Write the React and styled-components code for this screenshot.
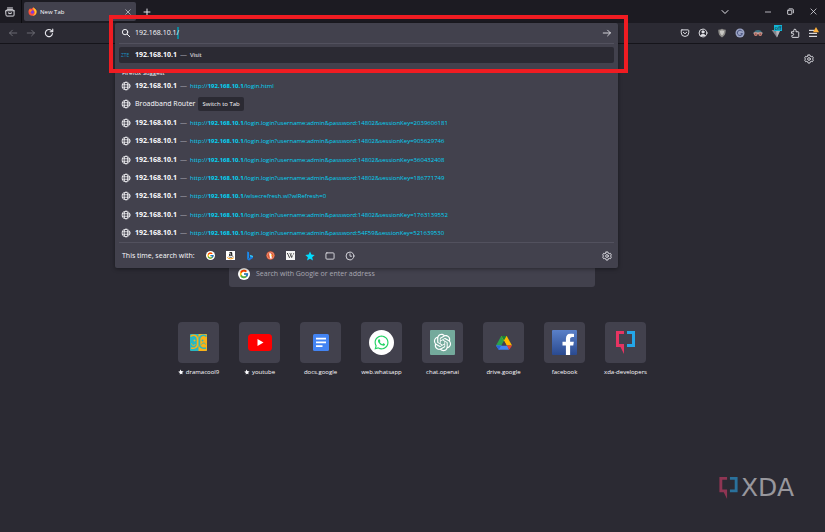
import React, { useEffect, useRef } from "react";
import styled, { createGlobalStyle } from "styled-components";
import { FcGoogle } from "react-icons/fc";
import { FaWikipediaW, FaAmazon, FaWhatsapp, FaFacebookF } from "react-icons/fa";
import { RiOpenaiFill } from "react-icons/ri";

const suggestions = [
  { path: "/login.html" },
  { title: "Broadband Router", switchTab: true },
  { path: "/login.login?username:admin&password:14802&sessionKey=2039606181" },
  { path: "/login.login?username:admin&password:14802&sessionKey=905629746" },
  { path: "/login.login?username:admin&password:14802&sessionKey=360432408" },
  { path: "/login.login?username:admin&password:14802&sessionKey=186771749" },
  { path: "/wlsecrefresh.wl?wlRefresh=0" },
  { path: "/login.login?username:admin&password:14802&sessionKey=1763139552" },
  { path: "/login.login?username:admin&password:54F59&sessionKey=521639530" },
];

/* ---------- line icons ---------- */

const Line = ({ size = 10, width = 1.4, children }) => (
  <svg
    width={size}
    height={size}
    viewBox="0 0 16 16"
    fill="none"
    stroke="currentColor"
    strokeWidth={width}
    strokeLinecap="round"
    strokeLinejoin="round"
    aria-hidden="true"
  >
    {children}
  </svg>
);

const ViewIcon = () => (
  <Line size={10} width={1.5}>
    <path d="M4 1.500h8" />
    <path d="M1.500 6 3.500 3.800h9L14.500 6v7a1.500 1.500 0 0 1-1.500 1.500H3A1.500 1.500 0 0 1 1.500 13zM1.500 6h13M6 9v1.500h4V9" />
  </Line>
);
const CloseIcon = ({ size = 6 }) => (
  <Line size={size} width={1.7}>
    <path d="M2 2l12 12M14 2 2 14" />
  </Line>
);
const PlusIcon = () => (
  <Line size={8} width={2}>
    <path d="M8 2v12M2 8h12" />
  </Line>
);
const ChevronIcon = () => (
  <Line size={8} width={2}>
    <path d="M2 5l6 6 6-6" />
  </Line>
);
const MinimizeIcon = () => (
  <Line size={6} width={2}>
    <path d="M1 8h14" />
  </Line>
);
const RestoreIcon = () => (
  <Line size={7} width={2}>
    <rect x="1.5" y="5" width="9.5" height="9.5" rx="1" />
    <path d="M5 2h7a2.5 2.5 0 0 1 2.5 2.5V11" />
  </Line>
);
const BackIcon = () => (
  <Line>
    <path d="M14 8H2.500M7 3.500 2.500 8 7 12.500" />
  </Line>
);
const ForwardIcon = () => (
  <Line>
    <path d="M2 8h11.500M9 3.500 13.500 8 9 12.500" />
  </Line>
);
const ReloadIcon = () => (
  <Line width={1.8}>
    <path d="M13.500 9A5.700 5.700 0 1 1 12 4.200l1.500 1.300M14 1.800V6H9.800" />
  </Line>
);
const SearchIcon = () => (
  <Line width={1.5}>
    <circle cx="6.500" cy="6.500" r="4.300" />
    <path d="M10 10l4 4" />
  </Line>
);
const GlobeIcon = () => (
  <Line width={1.2}>
    <circle cx="8" cy="8" r="6.300" />
    <ellipse cx="8" cy="8" rx="3" ry="6.300" />
    <path d="M2 6h12M2 10h12" />
  </Line>
);
const GearIcon = () => (
  <Line width={1.4}>
    <path d="M6.500 1.500h3l.5 2 1.500.8 2-.6 1.500 2.600L13.500 8l1.500 1.700-1.500 2.600-2-.6-1.500.8-.5 2h-3l-.5-2-1.500-.8-2 .6L1 9.700 2.500 8 1 6.300l1.500-2.600 2 .6L6 3.500z" />
    <circle cx="8" cy="8" r="2.200" />
  </Line>
);
const PocketIcon = () => (
  <Line width={1.5}>
    <path d="M3 3h10a1 1 0 0 1 1 1v3.500a6 6 0 0 1-12 0V4a1 1 0 0 1 1-1z" />
    <path d="M5.300 6.800 8 9.300l2.700-2.500" />
  </Line>
);
const AccountIcon = () => (
  <Line width={1.5}>
    <circle cx="8" cy="8" r="6.300" />
    <circle cx="8" cy="6.300" r="1.800" fill="currentColor" />
    <path d="M4.500 11.500c.8-1.500 6.200-1.500 7 0z" fill="currentColor" />
  </Line>
);
const ExtensionIcon = () => (
  <Line width={1.5}>
    <path d="M3 6h3V3.700a1.800 1.800 0 0 1 3.600 0V6H13a1 1 0 0 1 1 1v7a1 1 0 0 1-1 1H4a1 1 0 0 1-1-1v-2.200h1.200a1.600 1.600 0 0 0 0-3.300H3z" />
  </Line>
);
const TabIcon = () => (
  <Line width={1.4}>
    <rect x="1.500" y="3" width="13" height="10" rx="1.500" />
  </Line>
);
const ClockIcon = () => (
  <Line width={1.4}>
    <circle cx="8" cy="8" r="6.300" />
    <path d="M8 4.500v3.800h2.500" />
  </Line>
);

/* ---------- colour icons ---------- */

const FirefoxIcon = () => (
  <svg width="9" height="9" viewBox="0 0 16 16" aria-hidden="true">
    <path d="M2.500 3.500 4 2l1 1.700C7 2.500 8 2 9.500.3c1 2 5.700 3.200 5.700 8A7.200 7.200 0 0 1 .8 8.500c0-2 .7-3.700 1.700-5z" fill="#ff4f3c" />
    <path d="M9.500.3c1 2 5.700 3.200 5.700 8A7.200 7.200 0 0 1 8 15.700c5-2.700 5-7 2.500-10-.8-1.300-1.500-3-1-5.400z" fill="#ffc52e" />
    <circle cx="7.800" cy="8.800" r="3.200" fill="#7b3ddb" />
    <path d="M2.500 5c2-.8 3.500 0 5 1.200C6.500 8 5 7.500 4.500 9 3 8.500 2.300 6.500 2.500 5z" fill="#ff8a1d" />
  </svg>
);
const ShieldIcon = () => (
  <svg width="10" height="10" viewBox="0 0 16 16" aria-hidden="true">
    <path d="M8 1c2 1.300 4 1.700 6 1.700 0 6-1.200 9.700-6 12.300C3.200 12.400 2 8.700 2 2.700 4 2.700 6 2.300 8 1z" fill="#8c8b88" />
    <path d="M8 3.500c1 .7 2.300 1 3.500 1-.2 3.500-1 6-3.500 7.500C5.500 10.500 4.700 8 4.500 4.500c1.200 0 2.500-.3 3.500-1z" fill="#c9c8c4" />
  </svg>
);
const GrammarlyIcon = () => (
  <svg width="10" height="10" viewBox="0 0 16 16" aria-hidden="true">
    <circle cx="8" cy="8" r="7.200" fill="#9aa3c4" />
    <path d="M11.500 5.500A4.200 4.200 0 1 0 12 9H9" fill="none" stroke="#414b78" strokeWidth="1.500" />
  </svg>
);
const GogglesIcon = () => (
  <svg width="10" height="10" viewBox="0 0 16 16" aria-hidden="true">
    <path d="M2 7c1-5 11-5 12 0z" fill="#3f7484" />
    <rect x="1" y="7" width="14" height="2.500" fill="#b9c3c8" />
    <circle cx="4.500" cy="9.700" r="3" fill="#d38577" />
    <circle cx="11.500" cy="9.700" r="3" fill="#d38577" />
    <circle cx="4.500" cy="9.700" r="1" fill="#3c3542" />
    <circle cx="11.500" cy="9.700" r="1" fill="#3c3542" />
  </svg>
);
const FunnelIcon = () => (
  <svg width="10" height="10" viewBox="0 0 16 16" aria-hidden="true">
    <path d="M1 3h14L9.500 15z" fill="#85848c" />
    <path d="M8 3h7L9.500 15z" fill="#b5b4ba" />
  </svg>
);
const MenuIcon = () => (
  <svg width="12" height="12" viewBox="0 0 18 18" aria-hidden="true">
    <path d="M3 5h8M3 9.500h12M3 14h12" stroke="#fbfbfe" strokeWidth="1.500" />
    <path d="M13.500 0 18 8H9z" fill="#ffb13b" />
  </svg>
);
const AmazonIcon = () => (
  <svg width="9" height="9" viewBox="0 0 18 18" aria-hidden="true">
    <rect width="18" height="18" fill="#fff" />
    <FaAmazon x="3" y="1" size={13} color="#111" />
    <path d="M2.500 13c4 3.500 9 3.500 13 .5" fill="none" stroke="#f90" strokeWidth="2" />
  </svg>
);
const BingIcon = () => (
  <svg width="10" height="10" viewBox="0 0 16 16" aria-hidden="true">
    <path d="M3.500.8 6.500 2v9l-3 2.500z" fill="#1b8bf0" />
    <path d="M7.500 6 12.800 8v3.300L6.500 15l-3-1.500L8.500 10z" fill="#1a7ee0" />
    <path d="m7.500 6 5.300 2v1.500L8.800 9z" fill="#39c5ea" />
  </svg>
);
const DuckIcon = () => (
  <svg width="9" height="9" viewBox="0 0 16 16" aria-hidden="true">
    <circle cx="8" cy="8" r="7.500" fill="#de5833" />
    <circle cx="8" cy="8" r="6" fill="none" stroke="#f3c0b0" strokeWidth=".8" />
    <path d="M5.500 4.500C7 3 10 4 10 7l.3 6.300-3 .2z" fill="#fff" />
    <path d="M8.500 7.500h4l-3 2z" fill="#fdd20a" />
  </svg>
);
const WikiIcon = () => (
  <svg width="9" height="9" viewBox="0 0 18 18" aria-hidden="true">
    <rect width="18" height="18" fill="#f4f4f4" />
    <FaWikipediaW x="1" y="1" size={16} color="#111" />
  </svg>
);
const StarIcon = () => (
  <svg width="10" height="10" viewBox="0 0 16 16" aria-hidden="true">
    <path d="m8 .8 2.200 4.900 5.300.5-4 3.600 1.200 5.200L8 12.300 3.300 15l1.200-5.200-4-3.600 5.300-.5z" fill="#00ddff" />
  </svg>
);
const GoogleIcon = ({ size = 9 }) => (
  <svg width={size} height={size} viewBox="0 0 24 24" aria-hidden="true">
    <circle cx="12" cy="12" r="12" fill="#fff" />
    <FcGoogle x="2" y="2" size={20} />
  </svg>
);
const PinIcon = () => (
  <svg width="6" height="6" viewBox="0 0 16 16" aria-hidden="true">
    <path d="M6 1l3 4 6 1.500L11 10l1.500 4-4.500-1.500-3.500 2L5 10.500.5 7.500 5 6z" fill="#fbfbfe" />
  </svg>
);

/* ---------- shortcut logos ---------- */

const DramaLogo = () => (
  <svg width="17" height="17" viewBox="0 0 34 34" aria-hidden="true">
    <rect width="34" height="34" rx="2" fill="#27b8c4" />
    <path d="M17 0h15a2 2 0 0 1 2 2v30a2 2 0 0 1-2 2H17z" fill="#fbb116" />
    <path d="M1 5c6-5 14-2 14 6v9c0 7-6 10-13 8" fill="none" stroke="#fbb116" strokeWidth="3" />
    <path d="M33 5c-6-5-14-2-14 6v9c0 7 6 10 13 8" fill="none" stroke="#27b8c4" strokeWidth="3" />
    <path d="M3 19c1 5 6 5 8 1" fill="none" stroke="#fbb116" strokeWidth="2" />
    <path d="M23 21c2-4 7-4 8 0" fill="none" stroke="#27b8c4" strokeWidth="2" />
    <circle cx="9" cy="13" r="2" fill="#fbb116" />
    <circle cx="25" cy="13" r="2" fill="#27b8c4" />
  </svg>
);
const YoutubeLogo = () => (
  <svg width="24" height="17" viewBox="0 0 48 34" aria-hidden="true">
    <rect width="48" height="34" rx="7" fill="#f00" />
    <path d="M19 10v14l12-7z" fill="#fff" />
  </svg>
);
const DocsLogo = () => (
  <svg width="16" height="17" viewBox="0 0 32 34" aria-hidden="true">
    <rect width="32" height="34" rx="3" fill="#4384f3" />
    <path d="M6 9h20M6 16.500h20M6 24h13" stroke="#fff" strokeWidth="3.500" />
  </svg>
);
const WhatsappLogo = () => (
  <svg width="25" height="25" viewBox="0 0 50 50" aria-hidden="true">
    <circle cx="25" cy="25" r="25" fill="#fff" />
    <FaWhatsapp x="9" y="9" size={32} color="#25d366" />
  </svg>
);
const OpenaiLogo = () => (
  <svg width="25" height="25" viewBox="0 0 50 50" aria-hidden="true">
    <rect width="50" height="50" rx="2" fill="#74aa9c" />
    <RiOpenaiFill x="4" y="4" size={42} color="#fff" />
  </svg>
);
const DriveLogo = () => (
  <svg width="16" height="14" viewBox="0 0 32 28" aria-hidden="true">
    <path d="M10.500 0H16l3.500 6L7 27 0 19z" fill="#2ba24c" />
    <path d="M10.500 0h11L32 19H21z" fill="#ffba00" />
    <path d="M10.500 0H21l-5 9z" fill="#188038" />
    <path d="M10 19h13l3 8.500H5.500L0 19z" fill="#4285f4" />
    <path d="M0 19h10.500L5.500 27.500z" fill="#2b66d9" />
    <path d="M21.500 19H32l-5.500 8.500z" fill="#ea4335" />
    <path d="M16 9.500 21.500 19h-11z" fill="#42414d" />
  </svg>
);
const FacebookLogo = () => (
  <svg width="25" height="25" viewBox="0 0 50 50" aria-hidden="true">
    <defs>
      <linearGradient id="fb" x2="0" y2="1">
        <stop stopColor="#5a80c8" />
        <stop offset="1" stopColor="#2a4a90" />
      </linearGradient>
    </defs>
    <rect width="50" height="50" rx="2" fill="url(#fb)" />
    <FaFacebookF x="11" y="7" size={43} color="#fff" />
  </svg>
);
const XdaMark = ({ width, height, left, right }) => (
  <svg width={width} height={height} viewBox="0 0 38 46" aria-hidden="true">
    <path d="M16 0v6H6v20h10v20L9 32H0V0z" fill={left} />
    <path d="M22 0h16v32H22v-6h10V6H22z" fill={right} />
  </svg>
);

const engines = [
  ["Google", <GoogleIcon />],
  ["Amazon", <AmazonIcon />],
  ["Bing", <BingIcon />],
  ["DuckDuckGo", <DuckIcon />],
  ["Wikipedia", <WikiIcon />],
  ["Bookmarks", <StarIcon />],
  ["Tabs", <TabIcon />],
  ["History", <ClockIcon />],
];

const shortcuts = [
  { name: "dramacool9", icon: <DramaLogo />, pinned: true },
  { name: "youtube", icon: <YoutubeLogo />, pinned: true },
  { name: "docs.google", icon: <DocsLogo /> },
  { name: "web.whatsapp", icon: <WhatsappLogo /> },
  { name: "chat.openai", icon: <OpenaiLogo /> },
  { name: "drive.google", icon: <DriveLogo /> },
  { name: "facebook", icon: <FacebookLogo /> },
  {
    name: "xda-developers",
    icon: <XdaMark width={19} height={23} left="#e63462" right="#24a6e8" />,
  },
];

const App = () => {
  const inputRef = useRef(null);

  // the autofilled slash stays selected after the typed address
  useEffect(() => {
    const input = inputRef.current;
    input.focus();
    input.setSelectionRange(input.value.length - 1, input.value.length);
  }, []);

  return (
    <>
      <GlobalStyle />
      <TabStrip>
        <ViewCell>
          <IconButton aria-label="Firefox View"><ViewIcon /></IconButton>
        </ViewCell>
        <Tab>
          <FirefoxIcon />
          <TabTitle>New Tab</TabTitle>
          <IconButton $size={12} aria-label="Close tab"><CloseIcon /></IconButton>
        </Tab>
        <IconButton $size={22} aria-label="New tab"><PlusIcon /></IconButton>
        <WindowControls>
          <TabListCell>
            <IconButton aria-label="List all tabs"><ChevronIcon /></IconButton>
          </TabListCell>
          <IconButton $size={23} aria-label="Minimize"><MinimizeIcon /></IconButton>
          <IconButton $size={23} aria-label="Restore"><RestoreIcon /></IconButton>
          <IconButton $size={23} aria-label="Close"><CloseIcon size={7} /></IconButton>
        </WindowControls>
      </TabStrip>

      <Toolbar>
        <Nav>
          <IconButton $dim aria-label="Back"><BackIcon /></IconButton>
          <IconButton $dim aria-label="Forward"><ForwardIcon /></IconButton>
          <IconButton aria-label="Reload"><ReloadIcon /></IconButton>
        </Nav>
        <UrlSlot>
          <UrlPanel>
            <UrlRow>
              <SearchIcon />
              <UrlInput
                ref={inputRef}
                aria-label="Search or enter address"
                defaultValue="192.168.10.1/"
              />
              <IconButton $size={14} aria-label="Go"><ForwardIcon /></IconButton>
            </UrlRow>
            <TopResult href="#visit">
              <ZteMark>ZTE</ZteMark>
              <Host>192.168.10.1</Host>
              <Dash>—</Dash>
              <Action>Visit</Action>
            </TopResult>
            <GroupLabel>Firefox Suggest</GroupLabel>
            <Results>
              {suggestions.map((item, index) => (
                <Result href="#result" key={index}>
                  <GlobeIcon />
                  {item.switchTab ? (
                    <>
                      <span>{item.title}</span>
                      <SwitchChip>Switch to Tab</SwitchChip>
                    </>
                  ) : (
                    <>
                      <Host>192.168.10.1</Host>
                      <Dash>—</Dash>
                      <Url>
                        http://<b>192.168.10.1</b>
                        {item.path}
                      </Url>
                    </>
                  )}
                </Result>
              ))}
            </Results>
            <EngineBar>
              <EngineLabel>This time, search with:</EngineLabel>
              <Engines>
                {engines.map(([name, icon]) => (
                  <IconButton key={name} aria-label={name}>{icon}</IconButton>
                ))}
              </Engines>
              <IconButton $size={14} aria-label="Search settings"><GearIcon /></IconButton>
            </EngineBar>
            <Highlight />
          </UrlPanel>
        </UrlSlot>
        <Extensions>
          <IconButton aria-label="Pocket"><PocketIcon /></IconButton>
          <IconButton aria-label="Account"><AccountIcon /></IconButton>
          <IconButton aria-label="Ad blocker"><ShieldIcon /></IconButton>
          <IconButton aria-label="Grammar"><GrammarlyIcon /></IconButton>
          <IconButton aria-label="Privacy"><GogglesIcon /></IconButton>
          <IconButton aria-label="Filter">
            <FunnelIcon />
            <Badge>off</Badge>
          </IconButton>
          <IconButton aria-label="Extensions"><ExtensionIcon /></IconButton>
          <IconButton aria-label="Menu"><MenuIcon /></IconButton>
        </Extensions>
      </Toolbar>

      <Main>
        <Customize>
          <IconButton aria-label="Personalize new tab"><GearIcon /></IconButton>
        </Customize>
        <HomeSearch>
          <GoogleIcon size={12} />
          Search with Google or enter address
        </HomeSearch>
        <Shortcuts>
          {shortcuts.map((site) => (
            <Shortcut href={"#" + site.name} key={site.name}>
              <Tile>{site.icon}</Tile>
              <SiteName>
                {site.pinned && <PinIcon />}
                {site.name}
              </SiteName>
            </Shortcut>
          ))}
        </Shortcuts>
        <Watermark>
          <XdaMark width={19} height={22} left="#8f3553" right="#2a719c" />
          XDA
        </Watermark>
      </Main>
    </>
  );
};

const GlobalStyle = createGlobalStyle`
  * {
    box-sizing: border-box;
  }
  body {
    margin: 0;
    background: #2b2a33;
    color: #fbfbfe;
    font: 7px/12px "Open Sans", "Noto Sans", sans-serif;
  }
  a {
    color: inherit;
    text-decoration: none;
  }
  svg {
    flex: none;
    display: block;
  }
`;
const IconButton = styled.button`
  position: relative;
  display: flex;
  flex: none;
  align-items: center;
  justify-content: center;
  width: ${(p) => p.$size || 18}px;
  height: 16px;
  padding: 0;
  border: 0;
  background: none;
  color: ${(p) => (p.$dim ? "#74737c" : "#e6e6ec")};
`;
const TabStrip = styled.header`
  display: flex;
  align-items: center;
  height: 23px;
  background: #1c1b22;
`;
const ViewCell = styled.div`
  display: flex;
  align-items: center;
  width: 22px;
  height: 23px;
  margin-right: 2px;
  padding-left: 1px;
  border-right: 1px solid #0c0c0f;
`;
const Tab = styled.div`
  display: flex;
  align-items: center;
  gap: 3px;
  width: 112px;
  height: 19px;
  padding: 0 2px 0 4px;
  border-radius: 2px;
  background: #42414d;
`;
const TabTitle = styled.span`
  flex: 1;
  font-size: 6px;
`;
const WindowControls = styled.div`
  display: flex;
  margin-left: auto;
`;
const TabListCell = styled.div`
  margin-right: 22px;
`;
const Toolbar = styled.nav`
  display: flex;
  height: 21px;
  border-bottom: 1px solid #15141a;
`;
const Nav = styled.div`
  display: flex;
  align-items: center;
  width: 115px;
  padding-left: 4px;
`;
const UrlSlot = styled.div`
  position: relative;
  flex: 1;
`;
const UrlPanel = styled.div`
  position: absolute;
  z-index: 1;
  top: 0;
  left: 0;
  right: 0;
  padding: 0 4px;
  border-radius: 2px;
  background: #42414d;
  box-shadow: 0 1px 4px rgba(0, 0, 0, 0.4);
`;
const UrlRow = styled.div`
  display: flex;
  align-items: center;
  gap: 4px;
  height: 21px;
  padding-left: 2px;
  margin-bottom: 3px;
  border-bottom: 1px solid #52515e;
`;
const UrlInput = styled.input`
  flex: 1;
  min-width: 0;
  padding: 0;
  border: 0;
  outline: none;
  background: none;
  color: #fbfbfe;
  font: inherit;
  &::selection {
    background: #12869b;
    color: #fbfbfe;
  }
`;
const TopResult = styled.a`
  display: flex;
  align-items: center;
  gap: 3px;
  height: 16px;
  padding-left: 2px;
  border-radius: 2px;
  background: #2b2a33;
`;
const ZteMark = styled.span`
  width: 11px;
  color: #1c8fc0;
  font-size: 5px;
`;
const Host = styled.b`
  font-weight: 700;
`;
const Dash = styled.span`
  color: #a5a4ae;
`;
const Action = styled.span`
  font-size: 6px;
`;
const GroupLabel = styled.div`
  height: 14px;
  padding: 4px 3px 0;
  font-size: 6px;
  line-height: 12px;
`;
const Results = styled.div`
  display: flex;
  flex-direction: column;
  justify-content: space-between;
  min-height: 165px;
`;
const Result = styled.a`
  display: flex;
  align-items: center;
  gap: 3px;
  height: 18px;
  padding-left: 2px;
  & > svg {
    margin-right: 1px;
  }
`;
const SwitchChip = styled.span`
  padding: 1px 4px;
  border-radius: 2px;
  background: #2b2a33;
  font-size: 6px;
`;
const Url = styled.span`
  color: #00d4f5;
  font-size: 6px;
`;
const EngineBar = styled.div`
  display: flex;
  align-items: center;
  height: 26px;
  padding: 0 0 0 3px;
  border-top: 1px solid #52515e;
`;
const EngineLabel = styled.span`
  width: 75px;
`;
const Engines = styled.div`
  display: flex;
  flex: 1;
  gap: 2px;
  padding-left: 4px;
`;
const Highlight = styled.div`
  position: absolute;
  top: -8px;
  left: -6px;
  right: -10px;
  height: 58px;
  border: 4px solid #f01c22;
  pointer-events: none;
`;
const Extensions = styled.div`
  display: flex;
  align-items: center;
  justify-content: space-between;
  width: 146px;
  margin-left: 58px;
  margin-right: 3px;
`;
const Badge = styled.span`
  position: absolute;
  top: 0;
  right: 3px;
  padding: 0 1px;
  background: #12b5d5;
  color: #12303a;
  font-size: 6px;
  line-height: 6px;
`;
const Main = styled.main`
  display: flex;
  flex-direction: column;
  align-items: center;
  min-height: calc(100vh - 44px);
  padding-right: 1px;
`;
const Customize = styled.div`
  display: flex;
  justify-content: flex-end;
  width: 100%;
  padding: 7px 6px 0 0;
  margin-bottom: 194px;
`;
const HomeSearch = styled.div`
  display: flex;
  align-items: center;
  gap: 6px;
  width: 44%;
  min-width: 366px;
  height: 26px;
  padding-left: 9px;
  margin-bottom: 35px;
  border-radius: 3px;
  background: #42414d;
  color: #a9a8b2;
`;
const Shortcuts = styled.div`
  display: grid;
  grid-template-columns: repeat(8, 61px);
`;
const Shortcut = styled.a`
  display: flex;
  flex-direction: column;
  align-items: center;
  gap: 3px;
`;
const Tile = styled.span`
  display: flex;
  align-items: center;
  justify-content: center;
  width: 41px;
  height: 41px;
  border-radius: 4px;
  background: #42414d;
`;
const SiteName = styled.span`
  display: flex;
  align-items: center;
  gap: 2px;
  font-size: 6px;
  white-space: nowrap;
`;
const Watermark = styled.footer`
  display: flex;
  align-items: center;
  gap: 3px;
  width: 100%;
  justify-content: flex-end;
  margin-top: auto;
  padding: 0 30px 32px 0;
  color: #98979d;
  font: 25px/24px "DejaVu Sans", sans-serif;
`;

export default App;
